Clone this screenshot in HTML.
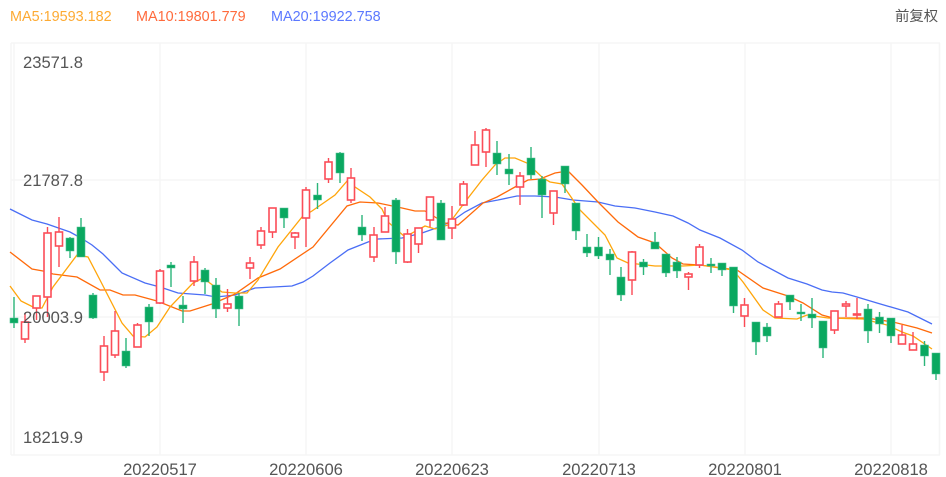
<!DOCTYPE html>
<html><head><meta charset="utf-8"><style>
html,body{margin:0;padding:0;background:#fff}
svg{display:block}
text{font-family:"Liberation Sans",sans-serif}
.ax{font-size:16.6px;fill:#555}
.lg{font-size:14.4px}
.w{stroke-width:1.4;fill:none}
</style></head><body>
<svg width="946" height="477" viewBox="0 0 946 477" xmlns="http://www.w3.org/2000/svg">
<g stroke="#f5f5f5" stroke-width="1.5" fill="none">
<path d="M11 43H940M11 180H940M11 317H940M11 455H940"/>
<path d="M11 43V455M14 43V455M160 43V455M306 43V455M452 43V455M599 43V455M745 43V455M891 43V455M939.500 43V455"/>
</g>
<text class="lg" x="10" y="21" fill="#fdaa33">MA5:19593.182</text>
<text class="lg" x="136" y="21" fill="#ff6a3c">MA10:19801.779</text>
<text class="lg" x="271" y="21" fill="#5b78ff">MA20:19922.758</text>
<text x="895" y="21" style="font-family:'Liberation Sans','Noto Sans CJK SC',sans-serif;font-size:14.4px" fill="#555">前复权</text>

<polyline fill="none" stroke="#4a6ef5" stroke-width="1.3" points="10,209 32,220 47,224 70,232 81,238 92,245 103,254 115,266 122,273 145,283 160,287 178,293 205,295 216,297 235,295 255,288 292,286 303,282 313,276 330,263 348,250 368,242 378,239 402,238 422,233 442,226 455,219 465,212 482,203 498,200 517,196 535,196 555,197 573,200 598,202 615,206 635,208 655,212 673,216 688,223 700,230 720,238 742,250 758,262 788,278 807,284 822,290 832,292 843,293 857,297 877,303 908,312 932,324"/>
<polyline fill="none" stroke="#ff6a0a" stroke-width="1.3" points="10,252 32,269 43,271 53,274 77,277 100,290 110,290 123,295 135,295 157,301 182,311 190,311 212,304 235,294 258,278 280,269 313,247 347,206 360,202 378,203 402,208 415,211 425,211 435,217 445,223 458,225 465,219 483,203 497,197 515,187 528,180 540,179 555,173 568,171 582,185 598,202 618,222 638,237 655,243 672,258 683,264 700,265 737,270 763,288 788,296 803,303 822,315 833,318 867,318 893,322 917,328 932,333"/>
<polyline fill="none" stroke="#ffa50a" stroke-width="1.3" points="10,286 21,301 35,308 42,308 53,287 77,255 88,257 100,280 122,323 133,336 145,337 157,327 170,307 193,283 203,278 222,292 235,293 247,293 258,280 278,247 302,217 312,211 335,195 348,180 355,187 370,197 382,209 388,222 405,237 425,226 435,229 448,225 465,202 482,180 495,165 505,158 515,158 527,163 543,178 550,182 562,184 580,210 605,235 617,258 628,263 655,266 683,266 700,265 733,270 743,282 763,310 775,318 797,319 807,315 828,318 863,319 887,325 902,332 913,336 932,349"/>

<!-- green wicks -->
<path class="w" stroke="#2cb57a" d="M14 297V328M70 237V258M81 218V257M93 293V319M126 338V368M149 304V336M171 262V287M183 296V323M205 268V294M216 278V318M239 293V326M284 208V228M317.500 183V209M340 152V183M362 215V241M396 198V264M441 200V240M497 141V175M509 154V185M531 147V179M542 176V218M565 166V193M576 203V240M587 234V257M598.500 237V259M610 249V275M621 267V301M643.500 259V275M655 232V249M666 254V277M677 257V278M711 258V273M722 263V276M733.500 267V313M756 322V355M767 323V342M790 295V310M801 304V321M812 298V328M823 321V358M868 304V343M879.500 312V333M891 318V343M924.500 341V366M936 353V380"/>
<!-- green bodies -->
<path fill="#0aa860" stroke="#4fc093" stroke-width=".6" d="M10 318h8v5h-8zM66 238h8v13h-8zM77 227h8v30h-8zM89 295h8v23h-8zM122 351h8v15h-8zM145 307h8v15h-8zM167 265h8v3h-8zM179 305h8v4h-8zM201 270h8v12h-8zM212 285h8v24h-8zM235 296h8v13h-8zM280 208h8v10h-8zM313.500 195h8v5h-8zM336 153h8v20h-8zM358 227h8v8h-8zM392 200h8v52h-8zM437 203h8v37h-8zM493 153h8v11h-8zM505 169h8v5h-8zM527 158h8v17h-8zM538 179h8v16h-8zM561 166h8v18h-8zM572 203h8v28h-8zM583 247h8v6h-8zM594.500 247h8v9h-8zM606 254h8v6h-8zM617 277h8v18h-8zM639.500 262h8v5h-8zM651 242h8v7h-8zM662 254h8v19h-8zM673 262h8v9h-8zM707 264h8v2h-8zM718 263h8v7h-8zM729.500 267h8v39h-8zM752 322h8v20h-8zM763 327h8v9h-8zM786 295h8v7h-8zM797 312h8v2h-8zM808 314h8v4h-8zM819 321h8v27h-8zM864 309h8v22h-8zM875.500 317h8v7h-8zM887 318h8v18h-8zM920.500 345h8v11h-8zM932 353h8v21h-8z"/>
<!-- red wicks -->
<path class="w" stroke="#fb4a55" d="M25 313V343M36.500 296V320M47.500 227V317M59 217V267M104 336V381M115 311V358M137.500 323V347M160 269V304M194 256V286M227.500 289V312M250 257V279M261 227V249M272.500 208V238M295 232V249M306 187V247M328.500 158V183M351 168V203M374 227V262M385 207V232M407.500 229V263M418.500 228V253M430 197V227M452 206V239M463.500 181V206M475 131V165M486 128V167M520 172V205M553.500 191V225M632 251V295M688.500 272V290M699.500 244V268M744.500 298V327M778.500 301V317M834.500 311V334M846 301V317M857 298V319M902 325V344M913 332V350"/>
<!-- red bodies -->
<g fill="#fff" stroke="#fb4d58" stroke-width="1.6">
<rect x="21.500" y="322" width="7" height="17"/><rect x="33" y="296" width="7" height="12"/><rect x="44" y="233" width="7" height="64"/><rect x="55.500" y="232" width="7" height="14"/><rect x="100.500" y="346" width="7" height="26"/><rect x="111.500" y="331" width="7" height="24"/><rect x="134" y="325" width="7" height="22"/><rect x="156.500" y="271" width="7" height="32"/><rect x="190.500" y="262" width="7" height="19"/><rect x="224" y="304" width="7" height="4"/><rect x="246.500" y="263" width="7" height="5"/><rect x="257.500" y="231" width="7" height="14"/><rect x="269" y="208" width="7" height="24"/><rect x="291.500" y="233" width="7" height="4"/><rect x="302.500" y="190" width="7" height="28"/><rect x="325" y="162" width="7" height="17"/><rect x="347.500" y="178" width="7" height="22"/><rect x="370" y="235" width="7" height="22"/><rect x="381.500" y="216" width="7" height="16"/><rect x="404" y="234" width="7" height="28"/><rect x="415" y="228" width="7" height="16"/><rect x="426.500" y="197" width="7" height="23"/><rect x="448.500" y="219" width="7" height="9"/><rect x="460" y="184" width="7" height="21"/><rect x="471.500" y="145" width="7" height="20"/><rect x="482.500" y="130" width="7" height="22"/><rect x="516.500" y="176" width="7" height="11"/><rect x="550" y="191" width="7" height="22"/><rect x="628.500" y="252" width="7" height="28"/><rect x="685" y="274" width="7" height="3"/><rect x="696" y="247" width="7" height="18"/><rect x="741" y="305" width="7" height="11"/><rect x="775" y="304" width="7" height="13"/><rect x="831" y="311" width="7" height="19"/><rect x="842.500" y="304" width="7" height="2"/><rect x="853.500" y="314" width="7" height="1"/><rect x="898.500" y="335" width="7" height="9"/><rect x="909.500" y="344" width="7" height="6"/>
</g>

<text class="ax" x="23" y="68">23571.8</text>
<text class="ax" x="23" y="186">21787.8</text>
<text class="ax" x="23" y="323">20003.9</text>
<text class="ax" x="23" y="443">18219.9</text>
<g class="ax" text-anchor="middle">
<text class="ax" x="160" y="475" text-anchor="middle">20220517</text>
<text class="ax" x="306" y="475" text-anchor="middle">20220606</text>
<text class="ax" x="452" y="475" text-anchor="middle">20220623</text>
<text class="ax" x="599" y="475" text-anchor="middle">20220713</text>
<text class="ax" x="745" y="475" text-anchor="middle">20220801</text>
<text class="ax" x="891" y="475" text-anchor="middle">20220818</text>
</g>
</svg>
</body></html>
